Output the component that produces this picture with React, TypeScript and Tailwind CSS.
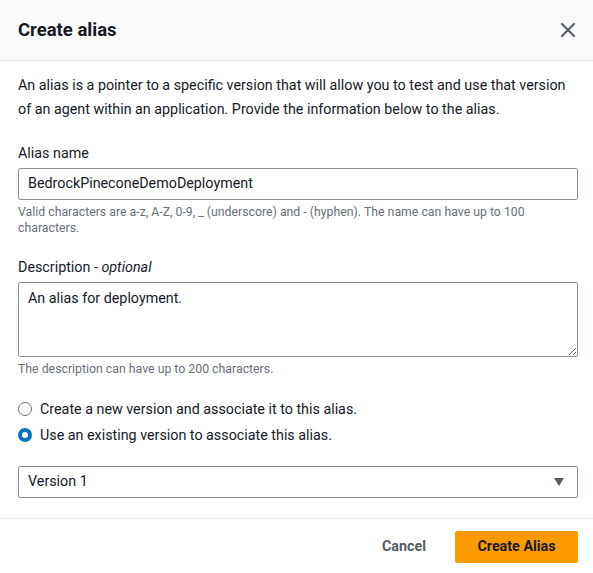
import { X } from 'lucide-react'

export default function App() {
  return (
    <div className="w-[593px] h-[573px] bg-white overflow-hidden text-[#16191f] text-[14.3px]" style={{ fontFamily: 'Roboto, "Noto Sans", sans-serif' }}>
      <div className="h-[61px] bg-[#fafafa] border-b border-[#e9ebed] flex items-center justify-between pl-[18px] pr-[13px]">
        <h2 className="text-[18.5px] font-bold leading-[22px]">Create alias</h2>
        <X className="w-[24px] h-[24px] text-[#545b64]" strokeWidth={2} />
      </div>

      <div className="pl-[18px] pr-[15px] pt-[12px] pb-[20px] border-b border-[#e9ebed]">
        <p className="leading-[24px]">
          An alias is a pointer to a specific version that will allow you to test and use that version of an agent within an application. Provide the information below to the alias.
        </p>

        <div className="mt-[21px]">
          <label className="block leading-[22px]">Alias name</label>
          <div className="mt-[4px] h-[32px] border border-[#879596] rounded-[2px] px-[9px] flex items-center">
            BedrockPineconeDemoDeployment
          </div>
          <p className="mt-[4px] text-[12.3px] leading-[16px] text-[#687078]">
            Valid characters are a-z, A-Z, 0-9, _ (underscore) and - (hyphen). The name can have up to 100 characters.
          </p>
        </div>

        <div className="mt-[20px]">
          <label className="block leading-[22px]">
            Description - <i>optional</i>
          </label>
          <textarea
            className="mt-[4px] block w-full h-[75px] border border-[#879596] rounded-[2px] px-[9px] py-[4px] leading-[22px] outline-none"
            defaultValue="An alias for deployment."
          />
          <p className="mt-[4px] text-[12.3px] leading-[16px] text-[#687078]">
            The description can have up to 200 characters.
          </p>
        </div>

        <div className="mt-[21px] flex flex-col gap-[4px]">
          <div className="flex items-center gap-[8px] leading-[22px]">
            <span className="w-[14px] h-[14px] rounded-full border-[1.5px] border-[#687078] bg-white" />
            <span>Create a new version and associate it to this alias.</span>
          </div>
          <div className="flex items-center gap-[8px] leading-[22px]">
            <span className="w-[14px] h-[14px] rounded-full border-[4px] border-[#0073bb] bg-white" />
            <span>Use an existing version to associate this alias.</span>
          </div>
        </div>

        <div className="mt-[20px] h-[32px] border border-[#879596] rounded-[2px] pl-[9px] pr-[12px] flex items-center justify-between">
          <span>Version 1</span>
          <svg width="12" height="10" viewBox="0 0 12 10">
            <path d="M1 1h10L6 9z" fill="#545b64" />
          </svg>
        </div>
      </div>

      <div className="flex items-center justify-end gap-[25px] pr-[15px] pt-[12px]">
        <button className="text-[#545b64] font-bold px-[4px]">Cancel</button>
        <button className="h-[32px] w-[123px] bg-[#ff9900] rounded-[2px] font-bold text-[#16191f]">Create Alias</button>
      </div>
    </div>
  )
}
